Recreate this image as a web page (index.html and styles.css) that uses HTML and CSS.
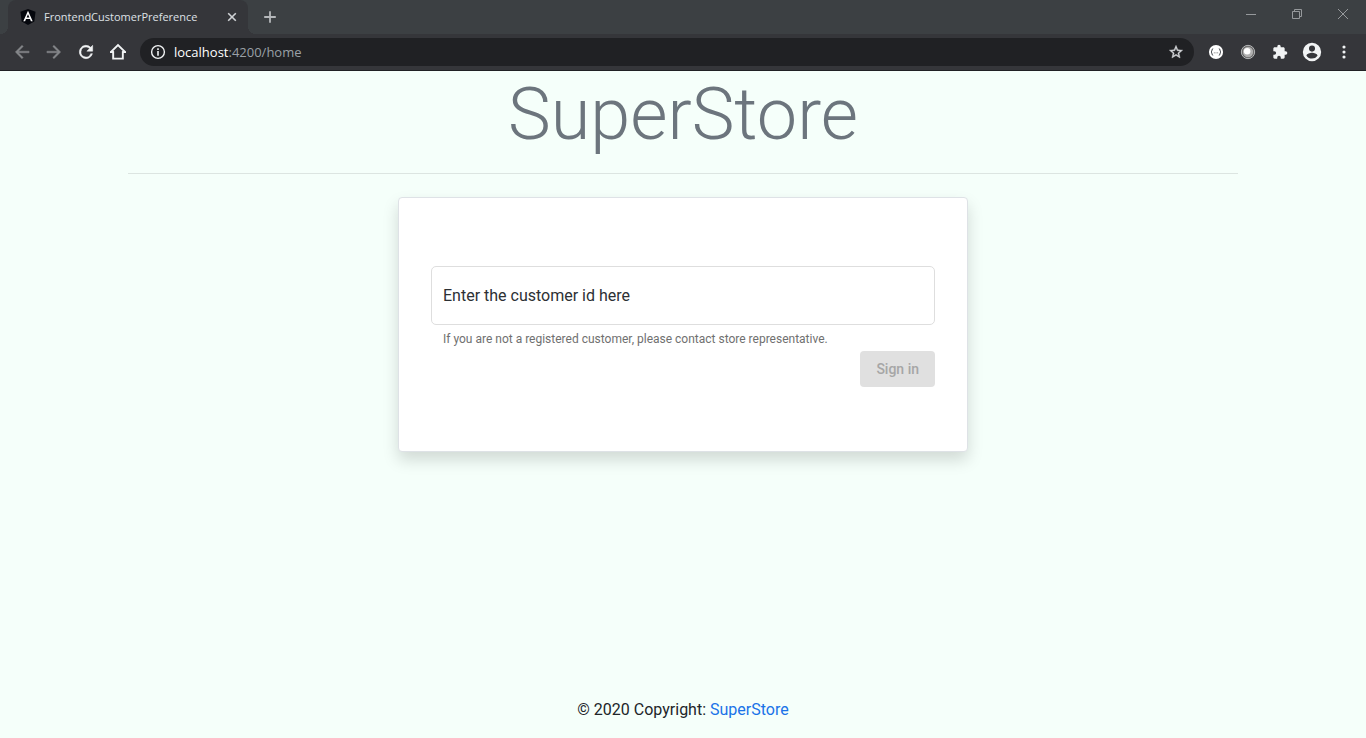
FILE: index.html
```html
<!DOCTYPE html>
<html lang="en">
<head>
<meta charset="utf-8">
<meta name="viewport" content="width=device-width, initial-scale=1">
<title>FrontendCustomerPreference</title>
<link rel="stylesheet" href="styles.css">
</head>
<body>
<header class="browser">
  <div class="tabstrip">
    <div class="tab">
      <svg class="favicon" viewBox="0 0 16 16" aria-hidden="true"><path fill="#05070d" d="M8 0l7.5 2.7-1.2 9.8L8 16l-6.300-3.500L.5 2.700z"/><path fill="#fff" fill-rule="evenodd" d="M8 1.800l4.700 10.500h-1.800l-.9-2.300H6l-.9 2.300H3.300zM8 5.200L6.600 8.600h2.800z"/></svg>
      <span class="tab-title">FrontendCustomerPreference</span>
      <button class="tab-close" type="button" aria-label="Close tab"><svg viewBox="0 0 16 16"><path stroke="#d0d3d6" stroke-width="1.600" d="M4.200 4.200l7.600 7.600M11.800 4.200l-7.600 7.600"/></svg></button>
    </div>
    <button class="new-tab" type="button" aria-label="New tab"><svg viewBox="0 0 16 16"><path stroke="#b4b7ba" stroke-width="1.800" d="M8 2.200v11.600M2.200 8h11.600"/></svg></button>
    <div class="window-controls">
      <button type="button" aria-label="Minimize"><svg viewBox="0 0 12 12"><path stroke="#96999c" d="M1 6.500h10"/></svg></button>
      <button type="button" aria-label="Restore"><svg viewBox="0 0 12 12"><path stroke="#96999c" fill="none" d="M1.500 3.500h7v7h-7zM3.500 3.500v-2h7v7h-2"/></svg></button>
      <button type="button" aria-label="Close"><svg viewBox="0 0 12 12"><path stroke="#96999c" d="M1 1l10 10M11 1L1 11"/></svg></button>
    </div>
  </div>
  <div class="toolbar">
    <button class="tool dim" type="button" aria-label="Back"><svg viewBox="0 0 24 24"><path stroke="currentColor" stroke-width=".5" d="M20.500 11H7.830l5.590-5.590L12 4l-8 8 8 8 1.410-1.410L7.830 13H20.500z"/></svg></button>
    <button class="tool dim" type="button" aria-label="Forward"><svg viewBox="0 0 24 24"><path stroke="currentColor" stroke-width=".5" d="M3.500 11h12.670l-5.590-5.590L12 4l8 8-8 8-1.410-1.410L16.170 13H3.500z"/></svg></button>
    <button class="tool" type="button" aria-label="Reload"><svg viewBox="0 0 24 24"><path stroke="currentColor" stroke-width=".6" d="M17.650 6.350A8 8 0 1 0 19.730 14h-2.080A6 6 0 1 1 12 6c1.660 0 3.140.69 4.220 1.780L13 11h7V4z"/></svg></button>
    <button class="tool" type="button" aria-label="Home"><svg viewBox="0 0 24 24"><path fill="none" stroke="currentColor" stroke-width="2.300" d="M3.300 12.200L12 3.800l8.700 8.400M6.200 11v8.900h11.600V11"/><path d="M2.400 11.200h4.800v2H2.400zM16.800 11.200h4.800v2h-4.800z"/></svg></button>
    <div class="omnibox">
      <svg class="info" viewBox="0 0 16 16" aria-hidden="true"><circle cx="8" cy="8" r="6.400" fill="none" stroke="#f1f3f4" stroke-width="1.400"/><path fill="#f1f3f4" d="M7.200 4.300h1.600v1.600H7.200zM7.200 7h1.600v4.700H7.200z"/></svg>
      <div class="url"><span class="host">localhost</span>:4200/home</div>
      <button class="star" type="button" aria-label="Bookmark this tab"><svg viewBox="0 0 24 24"><path stroke="#d5d7da" stroke-width=".6" d="M22 9.240l-7.190-.62L12 2 9.190 8.630 2 9.240l5.460 4.730L5.820 21 12 17.270 18.180 21l-1.630-7.030zM12 15.400l-3.760 2.270 1-4.280-3.320-2.880 4.380-.38L12 6.100l1.710 4.040 4.380.38-3.320 2.880 1 4.280z"/></svg></button>
    </div>
    <button class="tool" type="button" aria-label="JSON extension"><svg viewBox="0 0 24 24"><circle cx="12" cy="12" r="8.500" fill="#fff"/><path fill="none" stroke="#40444a" stroke-width="1.200" d="M8.600 8c-2 0-.9 3-2.400 4 1.500 1 .4 4 2.400 4M15.400 8c2 0 .9 3 2.400 4-1.500 1-.4 4-2.400 4"/><path stroke="#888" stroke-width="1.200" d="M9.400 13h1.200M11.400 13h1.200M13.400 13h1.200"/></svg></button>
    <button class="tool" type="button" aria-label="Extension"><svg viewBox="0 0 24 24"><circle cx="12" cy="12" r="8" fill="#666" stroke="#b4b6b7" stroke-width="1.200"/><circle cx="12" cy="12" r="6.200" fill="#b0b0b0"/><circle cx="11" cy="11" r="3.900" fill="#fff"/></svg></button>
    <button class="tool" type="button" aria-label="Extensions"><svg class="small" viewBox="0 0 24 24"><path d="M20.500 11H19V7c0-1.100-.9-2-2-2h-4V3.500a2.500 2.500 0 0 0-5 0V5H4c-1.100 0-2 .9-2 2v3.800h1.500a2.700 2.700 0 0 1 0 5.400H2V20c0 1.100.9 2 2 2h3.800v-1.500a2.700 2.700 0 0 1 5.400 0V22H17c1.100 0 2-.9 2-2v-4h1.500a2.500 2.500 0 0 0 0-5z"/></svg></button>
    <button class="tool" type="button" aria-label="Profile"><svg class="large" viewBox="0 0 24 24"><path d="M12 2a10 10 0 1 0 0 20 10 10 0 0 0 0-20zm0 3a3.300 3.300 0 1 1 0 6.600A3.300 3.300 0 0 1 12 5zm0 14.200a7.200 7.200 0 0 1-6-3.220c.03-1.990 4-3.080 6-3.080s5.970 1.090 6 3.080a7.200 7.200 0 0 1-6 3.220z"/></svg></button>
    <button class="tool" type="button" aria-label="Menu"><svg viewBox="0 0 24 24"><circle cx="12" cy="6" r="1.900"/><circle cx="12" cy="12" r="1.900"/><circle cx="12" cy="18" r="1.900"/></svg></button>
  </div>
</header>
<main class="page">
  <h1 class="brand">SuperStore</h1>
  <hr class="rule">
  <form class="card">
    <div class="field">
      <label class="field-label" for="customer-id">Enter the customer id here</label>
      <input class="field-input" id="customer-id" type="text" aria-describedby="customer-hint">
    </div>
    <p class="hint" id="customer-hint">If you are not a registered customer, please contact store representative.</p>
    <button class="sign-in" type="submit" disabled>Sign in</button>
  </form>
</main>
<footer class="footer">© 2020 Copyright: <a href="#">SuperStore</a></footer>
</body>
</html>
```
FILE: styles.css
```css
* {
  box-sizing: border-box;
}

body {
  margin: 0;
  min-height: 100vh;
  display: flex;
  flex-direction: column;
  background: #f5fffa;
  color: #212529;
  font: 16px/24px Roboto, sans-serif;
}

button {
  padding: 0;
  border: 0;
  background: none;
  font: inherit;
}

svg {
  display: block;
}

/* Browser frame */
.browser {
  background: #35363a;
  border-bottom: 1px solid #202124;
  font-family: "Open Sans", "Noto Sans", sans-serif;
}

.tabstrip {
  display: flex;
  height: 34px;
  padding-left: 8px;
  background: #3c4043;
}

.tab {
  position: relative;
  display: flex;
  align-items: center;
  gap: 8px;
  width: 240px;
  padding: 0 8px 0 12px;
  border-radius: 8px 8px 0 0;
  background: #35363a;
  color: #dee1e6;
  font-size: 11px;
}

.tab::before,
.tab::after {
  content: "";
  position: absolute;
  bottom: 0;
  width: 8px;
  height: 8px;
}

.tab::before {
  right: 100%;
  background: radial-gradient(circle at 0 0, #3c4043 8px, #35363a 8px);
}

.tab::after {
  left: 100%;
  background: radial-gradient(circle at 100% 0, #3c4043 8px, #35363a 8px);
}

.favicon,
.tab-close svg,
.new-tab svg {
  width: 16px;
  height: 16px;
}

.tab-title {
  flex: 1;
  white-space: nowrap;
}

.new-tab {
  padding: 0 14px;
}

.window-controls {
  display: flex;
  height: 28px;
  margin-left: auto;
}

.window-controls button {
  display: grid;
  place-items: center;
  width: 46px;
}

.window-controls svg {
  width: 12px;
  height: 12px;
}

.toolbar {
  display: flex;
  align-items: center;
  gap: 4px;
  height: 36px;
  padding: 0 8px;
}

.tool {
  display: grid;
  place-items: center;
  width: 28px;
  height: 28px;
  color: #f1f3f4;
}

.tool.dim {
  color: #85878a;
}

.tool svg {
  width: 20px;
  height: 20px;
  fill: currentColor;
}

.tool .small {
  width: 16px;
  height: 16px;
}

.tool .large {
  width: 22px;
  height: 22px;
}

.omnibox {
  display: flex;
  align-items: center;
  flex: 1;
  gap: 8px;
  height: 28px;
  margin: 0 4px;
  padding: 0 10px;
  border-radius: 14px;
  background: #202124;
  color: #9aa0a6;
  font-size: 13px;
}

.info {
  width: 16px;
  height: 16px;
}

.url {
  flex: 1;
}

.host {
  color: #fff;
}

.star svg {
  width: 16px;
  height: 16px;
  fill: #d5d7da;
}

/* Sign-in page */
.page {
  flex: 1;
  width: 100%;
  max-width: 1110px;
  margin: 0 auto;
}

.brand {
  margin: 0;
  color: #6c757d;
  font-size: 72px;
  font-weight: 300;
  line-height: 88px;
  text-align: center;
}

.rule {
  margin: 14px 0 23px;
  border: 0;
  border-top: 1px solid #dce5e1;
}

.card {
  display: flex;
  flex-direction: column;
  max-width: 570px;
  margin: 0 auto;
  padding: 68px 32px 64px;
  border: 1px solid #dee2e6;
  border-radius: 4px;
  background: #fff;
  box-shadow: 0 8px 16px rgba(0, 0, 0, 0.15);
}

.field {
  display: grid;
  height: 59px;
  border: 1px solid #dedede;
  border-radius: 5px;
}

.field-label,
.field-input {
  grid-area: 1 / 1;
}

.field-label {
  align-self: center;
  padding: 0 11px;
  color: #2c3034;
  pointer-events: none;
}

.field-input {
  width: 100%;
  padding: 0 11px;
  border: 0;
  outline: 0;
  background: transparent;
  font: inherit;
}

.hint {
  margin: 5px 12px 3px;
  color: #707070;
  font-size: 12px;
  line-height: 18px;
}

.sign-in {
  height: 36px;
  align-self: flex-end;
  padding: 0 16px;
  border-radius: 4px;
  background: #e0e0e0;
  color: #a6a6a6;
  font-size: 14px;
  font-weight: 500;
  line-height: 36px;
}

.footer {
  padding: 16px;
  text-align: center;
}

.footer a {
  color: #1a73e8;
  text-decoration: none;
}
```
